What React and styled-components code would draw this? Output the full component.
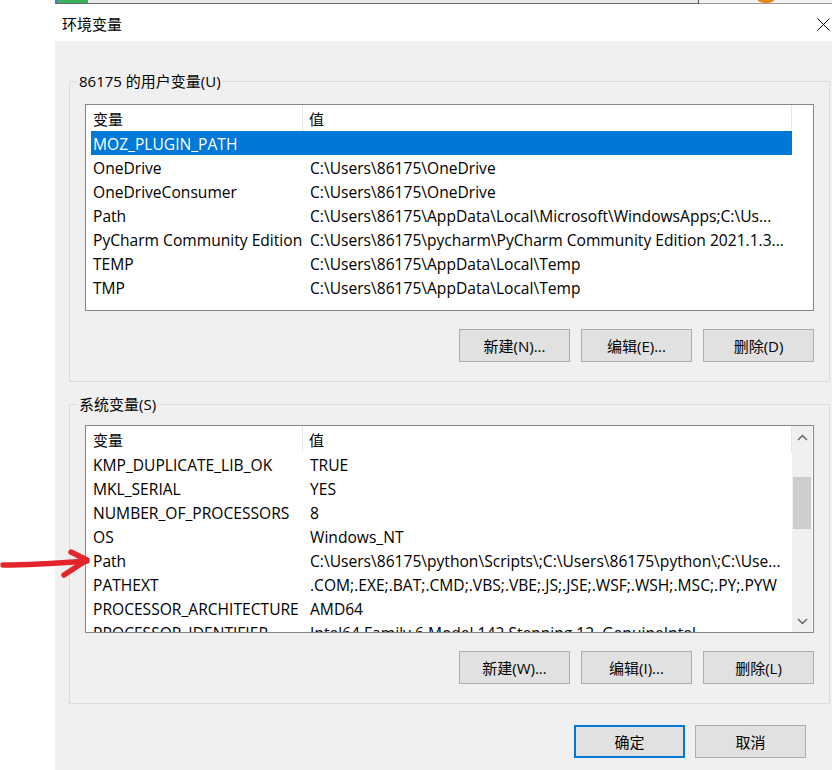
import React from 'react';
import styled, { createGlobalStyle } from 'styled-components';

const GlobalStyle = createGlobalStyle`
  html, body {
    margin: 0;
    padding: 0;
    background: #fff;
  }
  body {
    font-family: "Open Sans", "Noto Sans CJK SC", sans-serif;
    font-size: 15px;
    color: #000;
  }
  * {
    box-sizing: border-box;
  }
`;

const Page = styled.div`
  position: relative;
  width: 832px;
  height: 770px;
  overflow: hidden;
  display: flex;
  flex-direction: column;
`;

const TopStrip = styled.div`
  display: flex;
  height: 4px;
  margin-left: 55px;
`;

const StripPart = styled.div`
  width: ${(p) => p.w}px;
  flex: ${(p) => (p.w ? 'none' : '1')};
  background: ${(p) => p.bg};
  border-bottom: 1px solid ${(p) => p.line || '#6b6b6b'};
  border-right: ${(p) => (p.edge ? '1px solid #555' : 'none')};
  position: relative;
`;

const OrangeDot = styled.div`
  position: absolute;
  left: 58px;
  top: -6px;
  width: 18px;
  height: 9px;
  border-radius: 50%;
  background: #e08a10;
`;

const Window = styled.div`
  margin-left: 55px;
  flex: 1;
  display: flex;
  flex-direction: column;
`;

const TitleBar = styled.div`
  height: 37px;
  background: #fff;
  display: flex;
  align-items: center;
  justify-content: space-between;
  padding: 0 2px 0 7px;
`;

const Title = styled.span`
  font-size: 15px;
  line-height: 20px;
  margin-top: 2px;
`;

const CloseIcon = styled.svg`
  width: 13px;
  height: 13px;
  margin-top: 3px;
`;

const Body = styled.div`
  flex: 1;
  background: #f0f0f0;
  padding: 40px 2px 0 14px;
  display: flex;
  flex-direction: column;
`;

const Group = styled.div`
  position: relative;
  border: 1px solid #dcdcdc;
  margin-top: ${(p) => p.top || 0}px;
  padding: ${(p) => p.pt}px 15px 19px 15px;
  display: flex;
  flex-direction: column;
`;

const Legend = styled.span`
  position: absolute;
  left: 8px;
  top: -11px;
  padding: 0 1px;
  background: #f0f0f0;
  line-height: 20px;
`;

const ListBox = styled.div`
  height: ${(p) => p.h}px;
  border: 1px solid #82878f;
  background: #fff;
  display: flex;
  overflow: hidden;
`;

const ListContent = styled.div`
  width: 706px;
  display: flex;
  flex-direction: column;
  overflow: hidden;
`;

const Header = styled.div`
  display: flex;
  height: 26px;
  flex: none;
  border-right: 1px solid #e5e5e5;
  align-items: center;
`;

const HeaderCell = styled.div`
  height: 100%;
  display: flex;
  align-items: center;
  padding-top: 1px;
  width: ${(p) => (p.w ? `${p.w}px` : 'auto')};
  flex: ${(p) => (p.w ? 'none' : '1')};
  padding-left: ${(p) => p.pl}px;
  border-right: ${(p) => (p.divider ? '1px solid #e5e5e5' : 'none')};
`;

const Row = styled.div`
  display: flex;
  height: 24px;
  flex: none;
  align-items: center;
  padding-top: 1px;
  margin-left: 5px;
  font-size: 15.6px;
  background: ${(p) => (p.selected ? '#0078d7' : 'transparent')};
  color: ${(p) => (p.selected ? '#fff' : '#000')};
`;

const NameCell = styled.div`
  width: 212px;
  flex: none;
  padding-left: 2px;
  white-space: nowrap;
  overflow: hidden;
`;

const ValueCell = styled.div`
  flex: 1;
  padding-left: 7px;
  white-space: nowrap;
  overflow: hidden;
`;

const ScrollBar = styled.div`
  width: 20px;
  flex: none;
  background: #f0f0f0;
  display: flex;
  flex-direction: column;
  align-items: center;
`;

const ScrollArrow = styled.div`
  height: 22px;
  width: 100%;
  display: flex;
  align-items: center;
  justify-content: center;
  flex: none;
`;

const ScrollTrack = styled.div`
  flex: 1;
  width: 100%;
  padding: 29px 1px 0 1px;
`;

const Thumb = styled.div`
  height: 52px;
  background: #cdcdcd;
`;

const ButtonRow = styled.div`
  display: flex;
  justify-content: flex-end;
  gap: ${(p) => p.gap || 10}px;
  margin-top: ${(p) => p.mt || 0}px;
  padding-right: ${(p) => p.pr || 0}px;
`;

const Button = styled.button`
  width: 111px;
  height: 33px;
  background: #e1e1e1;
  border: ${(p) => (p.primary ? '2px solid #0078d7' : '1px solid #adadad')};
  font-family: inherit;
  font-size: 15px;
  color: #000;
  padding: 0;
  cursor: default;
`;

const Arrow = styled.svg`
  position: absolute;
  left: 0;
  top: 540px;
  width: 100px;
  height: 45px;
`;

const Chevron = ({ down }) => (
  <svg width="11" height="7" viewBox="0 0 11 7">
    <path
      d={down ? 'M1 1 L5.5 5.5 L10 1' : 'M1 6 L5.5 1.5 L10 6'}
      fill="none"
      stroke="#606060"
      strokeWidth="1.4"
    />
  </svg>
);

const userVars = [
  ['MOZ_PLUGIN_PATH', ''],
  ['OneDrive', 'C:\\Users\\86175\\OneDrive'],
  ['OneDriveConsumer', 'C:\\Users\\86175\\OneDrive'],
  ['Path', 'C:\\Users\\86175\\AppData\\Local\\Microsoft\\WindowsApps;C:\\Us...'],
  ['PyCharm Community Edition', 'C:\\Users\\86175\\pycharm\\PyCharm Community Edition 2021.1.3...'],
  ['TEMP', 'C:\\Users\\86175\\AppData\\Local\\Temp'],
  ['TMP', 'C:\\Users\\86175\\AppData\\Local\\Temp'],
];

const systemVars = [
  ['KMP_DUPLICATE_LIB_OK', 'TRUE'],
  ['MKL_SERIAL', 'YES'],
  ['NUMBER_OF_PROCESSORS', '8'],
  ['OS', 'Windows_NT'],
  ['Path', 'C:\\Users\\86175\\python\\Scripts\\;C:\\Users\\86175\\python\\;C:\\Use...'],
  ['PATHEXT', '.COM;.EXE;.BAT;.CMD;.VBS;.VBE;.JS;.JSE;.WSF;.WSH;.MSC;.PY;.PYW'],
  ['PROCESSOR_ARCHITECTURE', 'AMD64'],
  ['PROCESSOR_IDENTIFIER', 'Intel64 Family 6 Model 142 Stepping 12, GenuineIntel'],
];

const VarList = ({ rows, height, selected, scroll }) => (
  <ListBox h={height}>
    <ListContent>
      <Header>
        <HeaderCell w={217} pl={7} divider>变量</HeaderCell>
        <HeaderCell pl={6}>值</HeaderCell>
      </Header>
      {rows.map(([name, value], i) => (
        <Row key={name + i} selected={i === selected}>
          <NameCell>{name}</NameCell>
          <ValueCell>{value}</ValueCell>
        </Row>
      ))}
    </ListContent>
    {scroll ? (
      <ScrollBar>
        <ScrollArrow>
          <Chevron />
        </ScrollArrow>
        <ScrollTrack>
          <Thumb />
        </ScrollTrack>
        <ScrollArrow>
          <Chevron down />
        </ScrollArrow>
      </ScrollBar>
    ) : null}
  </ListBox>
);

export default function App() {
  return (
    <Page>
      <GlobalStyle />
      <TopStrip>
        <StripPart w={2} bg="#3a7bd5" />
        <StripPart w={31} bg="#3cb05a" />
        <StripPart w={611} bg="#e6e6e6" edge />
        <StripPart bg="#f2f2f2" line="#9a9a9a">
          <OrangeDot />
        </StripPart>
      </TopStrip>
      <Window>
        <TitleBar>
          <Title>环境变量</Title>
          <CloseIcon viewBox="0 0 13 13">
            <path d="M0.5 0.5 L12.5 12.5 M12.5 0.5 L0.5 12.5" stroke="#000" strokeWidth="1" />
          </CloseIcon>
        </TitleBar>
        <Body>
          <Group pt={22}>
            <Legend>86175 的用户变量(U)</Legend>
            <VarList rows={userVars} height={207} selected={0} />
            <ButtonRow mt={18} gap={11}>
              <Button>新建(N)...</Button>
              <Button>编辑(E)...</Button>
              <Button>删除(D)</Button>
            </ButtonRow>
          </Group>
          <Group top={22} pt={20}>
            <Legend>系统变量(S)</Legend>
            <VarList rows={systemVars} height={208} scroll />
            <ButtonRow mt={18} gap={11}>
              <Button>新建(W)...</Button>
              <Button>编辑(I)...</Button>
              <Button>删除(L)</Button>
            </ButtonRow>
          </Group>
          <ButtonRow mt={21} pr={24}>
            <Button primary>确定</Button>
            <Button>取消</Button>
          </ButtonRow>
        </Body>
      </Window>
      <Arrow viewBox="0 0 100 45">
        <g fill="none" stroke="#e3262b" strokeWidth="5.5" strokeLinecap="round" strokeLinejoin="round">
          <path d="M3 25 C30 25 60 23 87 21" />
          <path d="M71 12 L87 20 L64 35" />
        </g>
      </Arrow>
    </Page>
  );
}
